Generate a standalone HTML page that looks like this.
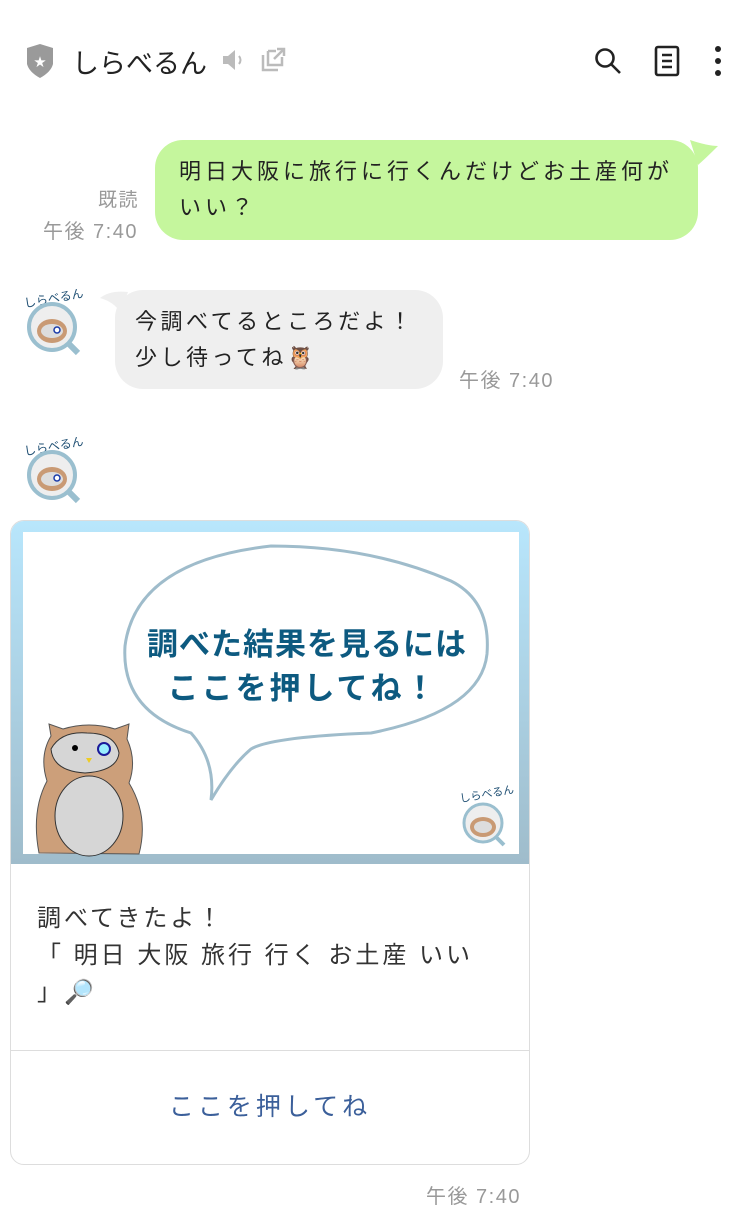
<!DOCTYPE html><html><head><meta charset="utf-8"><style>
body{margin:0;width:740px;height:1232px;background:#fff;font-family:"Liberation Sans","Noto Sans CJK JP",sans-serif;position:relative;overflow:hidden;color:#222}
.a{position:absolute}
.t{font-size:20px;color:#999;letter-spacing:1.5px}
</style></head><body>
<svg class="a" style="left:25px;top:44px" width="30" height="34" viewBox="0 0 30 34"><path d="M2 4 L15 0 L28 4 L28 20 Q26 28 15 34 Q4 28 2 20Z" fill="#9a9a9a"/><text x="15" y="22" font-size="12" fill="#fff" text-anchor="middle">★</text></svg>
<div class="a" style="left:72px;top:42px;font-size:27px;color:#222">しらべるん</div>
<svg class="a" style="left:220px;top:47px" width="26" height="26"><path d="M3 9h5l7-6v20l-7-6H3z" fill="#bbb"/><path d="M19 9q3 4 0 8" stroke="#bbb" stroke-width="2" fill="none"/></svg>
<svg class="a" style="left:258px;top:46px" width="28" height="28" fill="none" stroke="#bbb" stroke-width="2.5"><path d="M5 9v15h15M10 5h8M10 5v14h14v-8M16 13l10-10M19 3h7v7"/></svg>
<svg class="a" style="left:592px;top:45px" width="32" height="32" fill="none" stroke="#222" stroke-width="2.6"><circle cx="13" cy="13" r="8.5"/><path d="M19 19l9 9"/></svg>
<svg class="a" style="left:652px;top:44px" width="30" height="34" fill="none" stroke="#222" stroke-width="2.6"><rect x="4" y="3" width="22" height="28" rx="2"/><path d="M10 11h10M10 17h10M10 23h10"/></svg>
<svg class="a" style="left:710px;top:44px" width="16" height="34" fill="#222"><circle cx="8" cy="5" r="3"/><circle cx="8" cy="17" r="3"/><circle cx="8" cy="29" r="3"/></svg>

<div class="a" style="left:155px;top:140px;width:543px;height:100px;background:#c5f69d;border-radius:28px"></div>
<svg class="a" style="left:690px;top:140px" width="30" height="30"><path d="M0 0 Q18 6 28 6 Q16 18 8 25Z" fill="#c5f69d"/></svg>
<div class="a" style="left:179px;top:154px;font-size:22px;letter-spacing:4px;line-height:36px;width:505px">明日大阪に旅行に行くんだけどお土産何がいい？</div>
<div class="a t" style="left:98px;top:185px;font-size:19px">既読</div>
<div class="a t" style="left:43px;top:215px">午後 7:40</div>

<svg class="a" style="left:20px;top:285px" width="66" height="72"><text x="4" y="18" font-size="12" fill="#1f4f73" transform="rotate(-10 30 15)">しらべるん</text><circle cx="32" cy="42" r="23" fill="#eee" stroke="#9abfcf" stroke-width="4"/><path d="M48 58l10 10" stroke="#9abfcf" stroke-width="6"/><ellipse cx="32" cy="46" rx="15" ry="12" fill="#c99a74"/><ellipse cx="32" cy="46" rx="11" ry="7" fill="#ddd"/><circle cx="37" cy="45" r="3" fill="#fff" stroke="#1a3aa8" stroke-width="1.5"/></svg>
<svg class="a" style="left:100px;top:290px" width="30" height="30"><path d="M28 2 Q10 0 0 8 Q14 12 20 22Z" fill="#efefef"/></svg>
<div class="a" style="left:115px;top:290px;width:328px;height:99px;background:#efefef;border-radius:28px"></div>
<div class="a" style="left:135px;top:304px;font-size:22px;letter-spacing:3.5px;line-height:36px">今調べてるところだよ！<br>少し待ってね🦉</div>
<div class="a t" style="left:459px;top:364px">午後 7:40</div>

<svg class="a" style="left:20px;top:433px" width="66" height="72"><text x="4" y="18" font-size="12" fill="#1f4f73" transform="rotate(-10 30 15)">しらべるん</text><circle cx="32" cy="42" r="23" fill="#eee" stroke="#9abfcf" stroke-width="4"/><path d="M48 58l10 10" stroke="#9abfcf" stroke-width="6"/><ellipse cx="32" cy="46" rx="15" ry="12" fill="#c99a74"/><ellipse cx="32" cy="46" rx="11" ry="7" fill="#ddd"/><circle cx="37" cy="45" r="3" fill="#fff" stroke="#1a3aa8" stroke-width="1.5"/></svg>

<div class="a" style="left:10px;top:520px;width:518px;height:643px;border:1px solid #ddd;border-radius:14px;overflow:hidden">
<div style="height:343px;background:linear-gradient(#b8e6fc,#9fbccb);position:relative">
<div class="a" style="left:12px;top:11px;width:496px;height:322px;background:#fff"></div>
<svg class="a" style="left:0;top:0" width="520" height="343"><path d="M200 279 Q205 240 180 212 Q110 190 114 125 Q125 40 260 25 Q360 25 440 60 Q480 80 476 133 Q470 190 360 212 Q260 216 240 228 Q220 245 200 279Z" fill="#fff" stroke="#9fbccb" stroke-width="3"/>
<text x="296" y="134" font-size="31" font-weight="bold" fill="#0d5a80" text-anchor="middle" letter-spacing="1" font-family="Liberation Sans,Noto Sans CJK JP,sans-serif">調べた結果を見るには</text>
<text x="292" y="178" font-size="31" font-weight="bold" fill="#0d5a80" text-anchor="middle" letter-spacing="3" font-family="Liberation Sans,Noto Sans CJK JP,sans-serif">ここを押してね！</text>
<path d="M28 332 Q20 290 36 260 Q28 235 40 215 L38 203 L52 208 Q78 200 104 208 L118 203 L116 218 Q126 240 118 262 Q138 295 128 333Z" fill="#cc9f7a" stroke="#555" stroke-width="1"/>
<path d="M40 228 Q50 210 76 212 Q104 212 108 232 Q106 250 74 252 Q42 250 40 228Z" fill="#d6d6d6" stroke="#333"/>
<ellipse cx="78" cy="295" rx="34" ry="40" fill="#d6d6d6" stroke="#333"/>
<circle cx="64" cy="227" r="3" fill="#000"/><circle cx="93" cy="228" r="6" fill="#9ef" stroke="#1a1a9a" stroke-width="2"/><path d="M75 237l3 5 3-5z" fill="#ec2"/>
<g transform="translate(448,262)"><text x="0" y="16" font-size="11" fill="#1f4f73" transform="rotate(-10 20 10)">しらべるん</text><circle cx="24" cy="40" r="19" fill="#eee" stroke="#9abfcf" stroke-width="3"/><ellipse cx="24" cy="44" rx="13" ry="10" fill="#c99a74"/><ellipse cx="24" cy="44" rx="9" ry="6" fill="#ddd"/><path d="M37 54l8 8" stroke="#9abfcf" stroke-width="4"/></g>
</svg></div>
<div style="padding:36px 26px 0;font-size:24px;letter-spacing:3px;line-height:37px;color:#333;height:150px">調べてきたよ！<br>「 明日 大阪 旅行 行く お土産 いい<br>」🔎</div>
<div style="border-top:1px solid #ddd;height:112px;text-align:center;line-height:112px;font-size:25px;letter-spacing:4px;color:#3b5f9a">ここを押してね</div>
</div>
<div class="a t" style="left:426px;top:1180px">午後 7:40</div>
</body></html>
